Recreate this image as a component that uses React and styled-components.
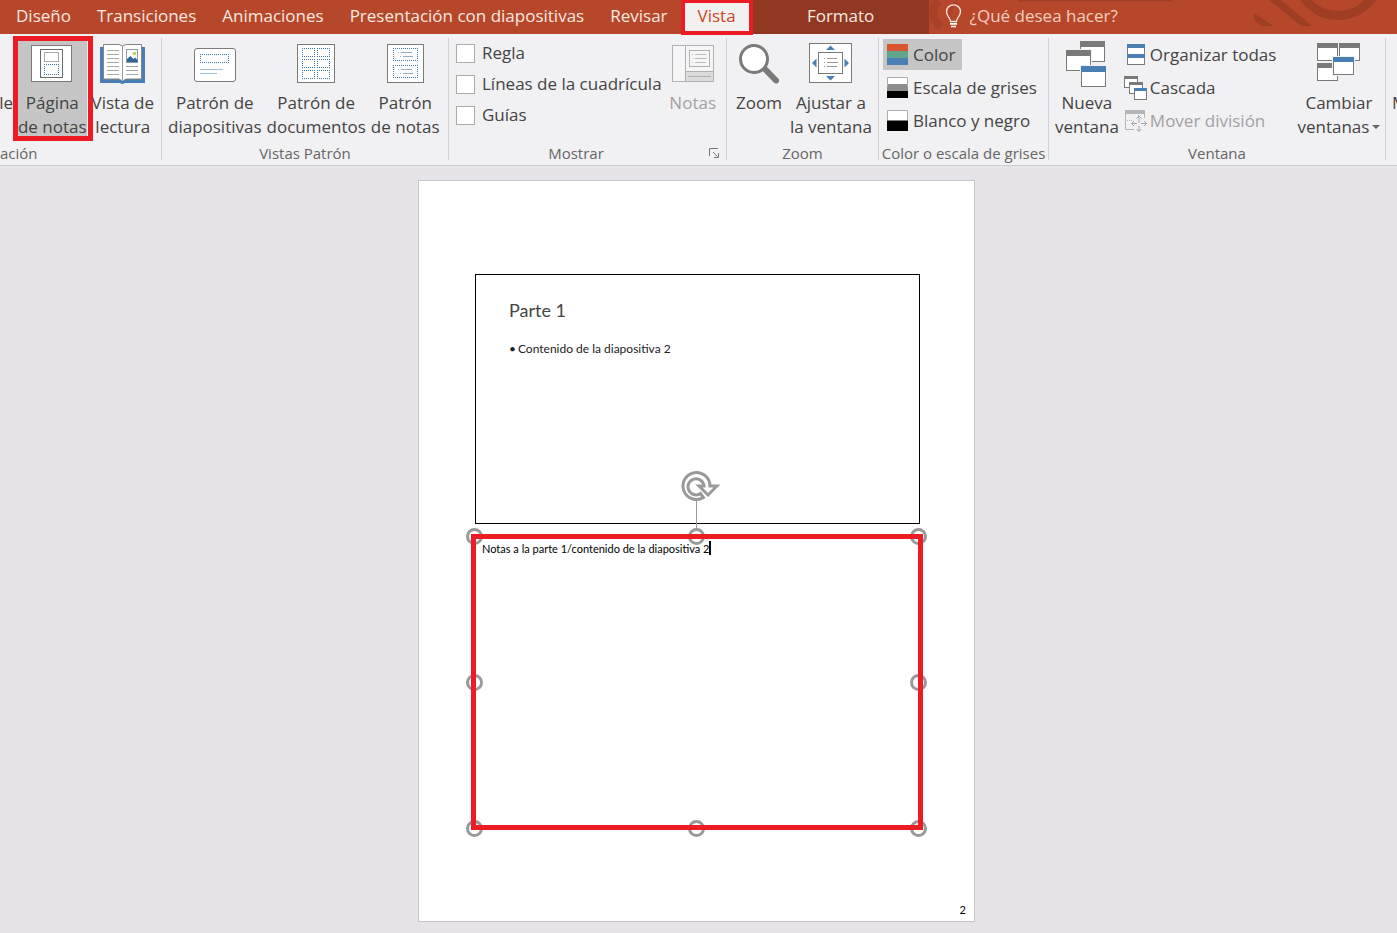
import React from "react";
import styled, { createGlobalStyle, css } from "styled-components";

const GlobalStyle = createGlobalStyle`
  *, *::before, *::after { box-sizing: border-box; }
  body {
    margin: 0;
    background: #e6e4e8;
    font-family: "Open Sans", "Noto Sans", sans-serif;
    font-size: 17px;
    line-height: 24px;
    color: #444;
  }
  button, input, textarea { font: inherit; color: inherit; margin: 0; }
`;

const RED = "#ed1c24";
const GREY = "#7a7a7a";
const BLUE = "#4a7fb5";

const Screen = styled.div`
  display: flex;
  flex-direction: column;
  min-height: 100vh;
  overflow-x: hidden;
`;

/* ---------- Tab strip ---------- */

const TabBar = styled.header`
  position: relative;
  display: flex;
  height: 34px;
  background: #b7472a;
  color: #fbe9e0;
`;

const Tabs = styled.nav`
  display: flex;
  padding-left: 3px;
`;

const Tab = styled.button`
  border: 0;
  padding: 0 13px 2px;
  background: transparent;
  white-space: nowrap;
  ${(p) =>
    p.$active &&
    css`
      position: relative;
      height: 35px;
      padding: 0 13px 3px;
      border: 4px solid ${RED};
      border-top-width: 3px;
      background: #f3f0f0;
      color: #c9472b;
    `}
`;

const ContextTabs = styled.div`
  display: flex;
  justify-content: center;
  width: 176px;
  background: #913822;
`;

const TellMe = styled.label`
  position: relative;
  display: flex;
  flex: 1;
  align-items: center;
  gap: 8px;
  padding: 0 0 2px 16px;
`;

const TellMeInput = styled.input`
  flex: 1;
  min-width: 0;
  border: 0;
  padding: 0;
  background: transparent;
  outline: 0;
  &::placeholder { color: #f6cfc0; opacity: 1; }
`;

const Swirls = styled.svg`
  position: absolute;
  top: 0;
  right: 0;
`;

/* ---------- Ribbon ---------- */

const Ribbon = styled.div`
  display: grid;
  grid-template-columns: 162fr 287fr 278fr 152fr 170fr 337fr 11fr;
  height: 132px;
  padding: 2px 0;
  border-bottom: 1px solid #cfcdd0;
  background: #f1f0f2;
`;

const Group = styled.section`
  position: relative;
  display: flex;
  flex-direction: column;
  min-width: 0;
  &::after {
    content: "";
    position: absolute;
    top: 2px;
    right: 0;
    bottom: 4px;
    width: 1px;
    background: ${(p) => (p.$last ? "transparent" : "#d2d0d3")};
  }
`;

const GroupBody = styled.div`
  display: flex;
  justify-content: ${(p) => p.$justify || "flex-start"};
  gap: ${(p) => p.$gap || 5}px;
  height: 106px;
  padding: ${(p) => p.$pad || "0 6px"};
`;

const GroupFoot = styled.div`
  display: flex;
  align-items: center;
  height: 22px;
  padding-right: 1px;
  font-size: 15px;
  line-height: 22px;
  color: #666;
`;

const GroupTitle = styled.span`
  flex: 1;
  text-align: ${(p) => p.$align || "center"};
  white-space: nowrap;
`;

const BigButton = styled.button`
  position: relative;
  display: flex;
  flex-direction: column;
  align-items: center;
  gap: 4px;
  flex: none;
  height: 105px;
  padding: 5px 0 0;
  border: 0;
  background: ${(p) => (p.$pressed ? "#c5c5c5" : "transparent")};
  color: ${(p) => (p.disabled ? "#a3a1a4" : "inherit")};
  white-space: nowrap;
  > svg { display: block; flex: none; }
`;

const Caption = styled.span`
  position: relative;
  z-index: 1;
`;

const Marker = styled.span`
  position: absolute;
  inset: 0 -6px 0 -5px;
  border: 5px solid ${RED};
`;

const Checks = styled.div`
  display: flex;
  flex: 1;
  flex-direction: column;
  gap: 7px;
  padding-top: 5px;
`;

const CheckRow = styled.label`
  display: flex;
  align-items: center;
  gap: 7px;
  white-space: nowrap;
`;

const CheckBox = styled.input`
  appearance: none;
  width: 19px;
  height: 19px;
  border: 1px solid #ababab;
  background: #fff;
  &:checked { background: #b7472a; }
`;

const Launcher = styled.button`
  display: flex;
  padding: 0;
  margin: 0 6px;
  border: 0;
  background: transparent;
`;

const Stack = styled.div`
  display: flex;
  flex-direction: column;
  align-items: flex-start;
  gap: 2px;
  padding-top: 3px;
`;

const SmallButton = styled.button`
  display: flex;
  align-items: center;
  gap: ${(p) => p.$gap || 5}px;
  height: 31px;
  padding: 0 7px 0 4px;
  border: 0;
  background: ${(p) => (p.$pressed ? "#c5c5c5" : "transparent")};
  color: ${(p) => (p.disabled ? "#a3a1a4" : "inherit")};
  white-space: nowrap;
`;

const WindowStack = styled(Stack)`
  flex: 1;
  margin-left: -6px;
`;

const Divider = styled.div`
  width: 1px;
  height: 70px;
  margin-top: 18px;
  background: #e2e1e4;
`;

const DropLine = styled.span`
  display: flex;
  align-items: center;
  gap: 3px;
`;

const EdgeButton = styled(BigButton)`
  padding-top: 55px;
  align-items: flex-start;
  overflow: hidden;
`;

/* ---------- Notes page ---------- */

const Canvas = styled.main`
  display: flex;
  flex: 1;
  justify-content: center;
  padding: 14px 4px 11px 0;
`;

const Sheet = styled.article`
  display: flex;
  flex-direction: column;
  width: 100%;
  max-width: 557px;
  min-height: 742px;
  padding: 93px 51px 0 52px;
  border: 1px solid #c6c6c6;
  background: #fff;
  font-family: Lato, "Liberation Sans", sans-serif;
  color: #000;
`;

const Slide = styled.section`
  height: 250px;
  margin: 0 3px 10px 4px;
  padding: 23px 33px;
  border: 1px solid #000;
`;

const SlideTitle = styled.h1`
  margin: 0 0 16px;
  font-size: 18px;
  font-weight: 400;
  line-height: 24px;
  color: #444;
`;

const Bullets = styled.ul`
  margin: 0;
  padding: 0;
  list-style: none;
  font-size: 12px;
  line-height: 22px;
  color: #222;
  li { display: flex; gap: 2px; }
  li::before { content: "•"; }
`;

const NotesBox = styled.section`
  position: relative;
  height: 296px;
`;

const NotesFrame = styled.div`
  position: relative;
  display: flex;
  align-items: flex-start;
  height: 100%;
  padding: 2px 6px;
  border: 5px solid ${RED};
`;

const NotesText = styled.textarea`
  field-sizing: content;
  height: 16px;
  padding: 0;
  border: 0;
  outline: 0;
  resize: none;
  overflow: hidden;
  background: transparent;
  font-size: 11px;
  line-height: 16px;
  white-space: pre;
`;

const Caret = styled.span`
  width: 2px;
  height: 14px;
  background: #000;
`;

const HandleArea = styled.div`
  position: absolute;
  inset: 2px 5px 2px 3px;
`;

const Handle = styled.span`
  position: absolute;
  left: ${(p) => p.$x};
  top: ${(p) => p.$y};
  width: 17px;
  height: 17px;
  margin: -8px;
  border: 3px solid #999;
  border-radius: 50%;
`;

const Rotate = styled.svg`
  position: absolute;
  left: 50%;
  bottom: 100%;
  margin: 0 0 2px -16px;
`;

const PageNumber = styled.footer`
  margin: auto -43px 0 0;
  font-size: 11px;
  line-height: 22px;
  text-align: right;
`;

/* ---------- Icons ---------- */

const Svg = ({ w, h = 46, children }) => (
  <svg width={w} height={h} viewBox={`0 0 ${w} ${h}`} fill="none" aria-hidden="true">
    {children}
  </svg>
);

/* Four separate sides, each starting on a whole pixel so that the dots stay sharp. */
const Dotted = ({ x, y, width: w, height: h }) => (
  <path
    d={`M${x - 0.5} ${y}h${w + 1}M${x - 0.5} ${y + h}h${w + 1}M${x} ${y - 0.5}v${h + 1}M${x + w} ${y - 0.5}v${h + 1}`}
    stroke="#3f78a8"
    strokeDasharray="1 1"
  />
);

const Win = ({ x, y, w, h, bar = 5, color = GREY, edge = GREY }) => (
  <g shapeRendering="crispEdges">
    <rect x={x + 0.5} y={y + 0.5} width={w - 1} height={h - 1} fill="#fff" stroke={edge} />
    <rect x={x} y={y} width={w} height={bar} fill={color} />
  </g>
);

const NotesPageIcon = () => (
  <Svg w={42}>
    <rect x="0.5" y="4.5" width="40" height="36" fill="#fff" stroke={GREY} />
    <rect x="9.5" y="8.5" width="22" height="28" stroke="#6a6a6a" />
    <rect x="13.5" y="11.5" width="14" height="9" stroke="#aaa" />
    <Dotted x={13.5} y={23.5} width={14} height={10} />
  </Svg>
);

const ReadingIcon = () => (
  <Svg w={46}>
    <path d="M0 6h45v36H25q-2.500 2-5 0H0z" fill={BLUE} />
    <path d="M3.500 3.500H19l3.500 1.500L26 3.500h15.500V38H26l-3.500 2L19 38H3.500z" fill="#fff" stroke="#858585" />
    <path d="M22.500 5v34" stroke="#999" />
    <path d="M7 9.500h12M7 13.500h12M7 17.500h12M7 21.500h12M7 25.500h12M7 29.500h12M7 33.500h12M26 25.500h12M26 29.500h12M26 33.500h12" stroke="#a5a5a5" />
    <rect x="26.500" y="8.500" width="11" height="13" fill="#fff" stroke="#8a9aa8" />
    <circle cx="34.500" cy="12.500" r="1.800" fill="#c4cc58" />
    <path d="M27 21v-3l3.500-3 3 3 1.500-1.500 2.500 2.500v2z" fill="#2f6597" />
  </Svg>
);

const SlideMasterIcon = () => (
  <Svg w={42}>
    <rect x="0.5" y="7.5" width="41" height="33" rx="2.500" fill="#fff" stroke={GREY} />
    <Dotted x={6.5} y={13.5} width={28} height={8} />
    <path d="M6 28.500h23M6 32.500h17" stroke="#a3bdd3" />
  </Svg>
);

const HandoutMasterIcon = () => (
  <Svg w={38}>
    <rect x="0.5" y="3.5" width="37" height="38" fill="#fff" stroke={GREY} />
    {[7.5, 18.5, 29.5].map((y) => (
      <g key={y}>
        <Dotted x={5.5} y={y} width={12} height={8} />
        <Dotted x={20.5} y={y} width={12} height={8} />
      </g>
    ))}
  </Svg>
);

const NotesMasterIcon = () => (
  <Svg w={37}>
    <rect x="0.5" y="3.5" width="36" height="38" fill="#fff" stroke={GREY} />
    {[7.5, 24.5].map((y) => (
      <g key={y}>
        <Dotted x={6.5} y={y} width={24} height={12} />
        <path d={`M14 ${y + 4}h11M16 ${y + 8}h10M11 ${y + 4}h1M13 ${y + 8}h1`} stroke="#8fb0cb" />
      </g>
    ))}
  </Svg>
);

const NotesIcon = () => (
  <Svg w={42}>
    <rect x="0.5" y="4.5" width="41" height="36" fill="#f6f5f7" stroke="#b0b0b0" />
    <rect x="14" y="31" width="27" height="9" fill="#dcdcdc" />
    <path d="M13.500 5v35M14 30.500h27M16 35.500h23" stroke="#b0b0b0" />
    <rect x="17.500" y="9.500" width="20" height="16" stroke="#b0b0b0" />
    <path d="M23 13.500h11M23 17.500h12M23 21.500h11M20 13.500h1M21 17.500h1M20 21.500h1" stroke="#bdbdbd" />
  </Svg>
);

const ZoomIcon = () => (
  <Svg w={40}>
    <path d="M25 27l12 12.500" stroke={GREY} strokeWidth="6" strokeLinecap="round" />
    <circle cx="15" cy="18" r="13.500" fill="#fff" stroke={GREY} strokeWidth="3" />
  </Svg>
);

const FitIcon = () => (
  <Svg w={43}>
    <rect x="0.5" y="2.5" width="42" height="39" fill="#fff" stroke={GREY} />
    <rect x="9.5" y="11.5" width="24" height="21" stroke={GREY} />
    <path d="M17 9h9l-4.500-4.500zM17 35h9l-4.500 4.500zM7.500 17.500v9L3 22zM35.500 17.500v9L40 22z" fill={BLUE} />
    <path d="M18 17.500h10M18 21.500h11M18 25.500h10M15 17.500h1M15 21.500h1M15 25.500h1" stroke="#999" />
  </Svg>
);

const NewWindowIcon = () => (
  <Svg w={41}>
    <Win x={14} y={0} w={25} h={21} bar={6} />
    <path d="M0 8h26v22H0z" fill="#f1f0f2" />
    <Win x={0} y={9} w={25} h={21} bar={6} />
    <path d="M14 24h27v22H14z" fill="#f1f0f2" />
    <Win x={15} y={25} w={25} h={21} bar={6} color={BLUE} />
  </Svg>
);

const SwitchIcon = () => (
  <Svg w={44}>
    <Win x={0} y={2} w={21} h={18} />
    <Win x={22} y={2} w={21} h={18} />
    <Win x={0} y={22} w={21} h={18} />
    <path d="M15 15h23v20H15z" fill="#f1f0f2" />
    <Win x={16} y={16} w={21} h={18} color={BLUE} />
  </Svg>
);

const Bands = ({ colors }) => (
  <Svg w={21} h={21}>
    {colors.map((c, i) => (
      <rect key={i} y={(i * 21) / colors.length} width="21" height={21 / colors.length} fill={c} />
    ))}
    {colors.includes("#fff") && <path d="M0.500 10V0.500h20V10" stroke="#ababab" />}
  </Svg>
);

const ArrangeIcon = () => (
  <Svg w={23} h={24}>
    <Win x={3} y={1} w={18} h={11} bar={4} color={BLUE} />
    <Win x={3} y={11} w={18} h={11} bar={4} color={BLUE} />
  </Svg>
);

const CascadeIcon = () => (
  <Svg w={23} h={24}>
    <Win x={0} y={0} w={14} h={12} bar={3} />
    <Win x={5} y={6} w={14} h={12} bar={3} />
    <Win x={10} y={12} w={13} h={12} bar={3} color={BLUE} />
  </Svg>
);

const SplitIcon = () => (
  <Svg w={23} h={24}>
    <path d="M1.500 2v18.500H10M20.500 2v7" stroke="#b5b5b5" />
    <rect x="1" y="1" width="20" height="4" fill="#b5b5b5" />
    <path d="M3 11.500h6M14.500 6v3" stroke="#b5b5b5" strokeDasharray="1 1" />
    <path d="M15 9v5M15 17v5M8 14.500h5M17 14.500h5M12.500 9.500L15 7l2.500 2.500M12.500 20l2.500 2.500 2.500-2.500M10 12l-2.500 2.500L10 17M20 12l2.500 2.500L20 17" stroke="#a6a6a6" />
  </Svg>
);

const BulbIcon = () => (
  <Svg w={17} h={24}>
    <path d="M5.500 17.500c0-4-4-5-4-10a7 6.700 0 0 1 14 0c0 5-4 6-4 10z" stroke="#fbe9e0" strokeWidth="1.300" />
    <path d="M5 19.800h7M6 22.500h5" stroke="#fff" strokeWidth="1.700" />
  </Svg>
);

const HeaderSwirls = () => (
  <Swirls width="468" height="34" viewBox="0 0 468 34" fill="none" aria-hidden="true">
    <g stroke="#a03d25">
      <path d="M9 0C2 9 3 20 12 27" strokeWidth="8" opacity="0.600" />
      <path d="M28 2c-8 4-10 18-4 25" strokeWidth="3" opacity="0.500" />
      <path d="M89 0.500h154" strokeWidth="2" />
      <circle cx="409" cy="-26" r="41.500" strokeWidth="9" />
    </g>
    <g fill="#a03d25">
      <path d="M340 0h12l31 26h-11z" />
      <path d="M325 13v7l8 6h11z" />
    </g>
  </Swirls>
);

const LauncherIcon = () => (
  <Svg w={11} h={11}>
    <path d="M0.500 8V0.500H9M4 4l4.500 4.500M9.500 5v4.500H5" stroke="#777" />
  </Svg>
);

const RotateHandle = () => (
  <Rotate width="40" height="64" viewBox="0 0 40 64" fill="none" aria-hidden="true">
    <path d="M16.500 31v27" stroke="#999" />
    <path
      d="M23.500 26.500A13.500 13.500 0 1 1 30 15h7l-9 9-9-9H24a8 8 0 1 0-3.500 7.500z"
      transform="translate(0 1)"
      stroke="#999"
      strokeWidth="3"
      fill="#fff"
    />
  </Rotate>
);

/* ---------- Page ---------- */

const Big = ({ icon, lines, marked, ...rest }) => (
  <BigButton type="button" $pressed={marked} {...rest}>
    {icon}
    {marked && <Marker />}
    <Caption>
      {lines[0]}
      {lines[1] && <br />}
      {lines[1]}
    </Caption>
  </BigButton>
);

const RibbonGroup = ({ title, titleAlign, launcher, last, gap, pad, justify, children }) => (
  <Group $last={last}>
    <GroupBody $gap={gap} $pad={pad} $justify={justify}>{children}</GroupBody>
    <GroupFoot>
      <GroupTitle $align={titleAlign}>{title}</GroupTitle>
      {launcher && (
        <Launcher type="button" aria-label="Mostrar">
          <LauncherIcon />
        </Launcher>
      )}
    </GroupFoot>
  </Group>
);

const tabs = ["Diseño", "Transiciones", "Animaciones", "Presentación con diapositivas", "Revisar", "Vista"];
const handles = [
  ["0%", "0%"], ["50%", "0%"], ["100%", "0%"],
  ["0%", "50%"], ["100%", "50%"],
  ["0%", "100%"], ["50%", "100%"], ["100%", "100%"],
];

export default function App() {
  return (
    <Screen>
      <GlobalStyle />
      <TabBar>
        <HeaderSwirls />
        <Tabs>
          {tabs.map((t) => (
            <Tab key={t} type="button" $active={t === "Vista"}>{t}</Tab>
          ))}
        </Tabs>
        <ContextTabs>
          <Tab type="button">Formato</Tab>
        </ContextTabs>
        <TellMe>
          <BulbIcon />
          <TellMeInput type="text" placeholder="¿Qué desea hacer?" aria-label="¿Qué desea hacer?" />
        </TellMe>
      </TabBar>

      <Ribbon>
        <RibbonGroup title="ación" titleAlign="left" justify="flex-end" gap={5} pad="0 8px 0 0">
          <EdgeButton type="button">le</EdgeButton>
          <Big icon={<NotesPageIcon />} lines={["Página", "de notas"]} marked />
          <Big icon={<ReadingIcon />} lines={["Vista de", "lectura"]} />
        </RibbonGroup>

        <RibbonGroup title="Vistas Patrón">
          <Big icon={<SlideMasterIcon />} lines={["Patrón de", "diapositivas"]} />
          <Big icon={<HandoutMasterIcon />} lines={["Patrón de", "documentos"]} />
          <Big icon={<NotesMasterIcon />} lines={["Patrón", "de notas"]} />
        </RibbonGroup>

        <RibbonGroup title="Mostrar" launcher pad="0 11px 0 7px">
          <Checks>
            {["Regla", "Líneas de la cuadrícula", "Guías"].map((t) => (
              <CheckRow key={t}>
                <CheckBox type="checkbox" />
                {t}
              </CheckRow>
            ))}
          </Checks>
          <Big icon={<NotesIcon />} lines={["Notas"]} disabled />
        </RibbonGroup>

        <RibbonGroup title="Zoom" gap={8} pad="0 0 0 9px">
          <Big icon={<ZoomIcon />} lines={["Zoom"]} />
          <Big icon={<FitIcon />} lines={["Ajustar a", "la ventana"]} />
        </RibbonGroup>

        <RibbonGroup title="Color o escala de grises" pad="0 4px">
          <Stack>
            <SmallButton type="button" $pressed>
              <Bands colors={["#d8552f", "#62a58c", "#4a7fb5"]} />
              Color
            </SmallButton>
            <SmallButton type="button">
              <Bands colors={["#fff", "#8c8c8c", "#000"]} />
              Escala de grises
            </SmallButton>
            <SmallButton type="button">
              <Bands colors={["#fff", "#000"]} />
              Blanco y negro
            </SmallButton>
          </Stack>
        </RibbonGroup>

        <RibbonGroup title="Ventana" gap={7} pad="0 9px 0 6px">
          <Big icon={<NewWindowIcon />} lines={["Nueva", "ventana"]} />
          <WindowStack>
            <SmallButton type="button" $gap={3}>
              <ArrangeIcon />
              Organizar todas
            </SmallButton>
            <SmallButton type="button" $gap={3}>
              <CascadeIcon />
              Cascada
            </SmallButton>
            <SmallButton type="button" $gap={3} disabled>
              <SplitIcon />
              Mover división
            </SmallButton>
          </WindowStack>
          <Divider />
          <Big
            icon={<SwitchIcon />}
            lines={[
              "Cambiar",
              <DropLine key="v">
                ventanas
                <svg width="8" height="4" aria-hidden="true"><path d="M0 0h8L4 4z" fill="#666" /></svg>
              </DropLine>,
            ]}
          />
        </RibbonGroup>

        <RibbonGroup last>
          <EdgeButton type="button">M</EdgeButton>
        </RibbonGroup>
      </Ribbon>

      <Canvas>
        <Sheet>
          <Slide>
            <SlideTitle>Parte 1</SlideTitle>
            <Bullets>
              <li>Contenido de la diapositiva 2</li>
            </Bullets>
          </Slide>
          <NotesBox>
            <HandleArea>
              <RotateHandle />
              {handles.map(([x, y]) => (
                <Handle key={x + y} $x={x} $y={y} />
              ))}
            </HandleArea>
            <NotesFrame>
              <NotesText
                rows={1}
                aria-label="Notas"
                spellCheck={false}
                defaultValue="Notas a la parte 1/contenido de la diapositiva 2"
              />
              <Caret />
            </NotesFrame>
          </NotesBox>
          <PageNumber>2</PageNumber>
        </Sheet>
      </Canvas>
    </Screen>
  );
}
